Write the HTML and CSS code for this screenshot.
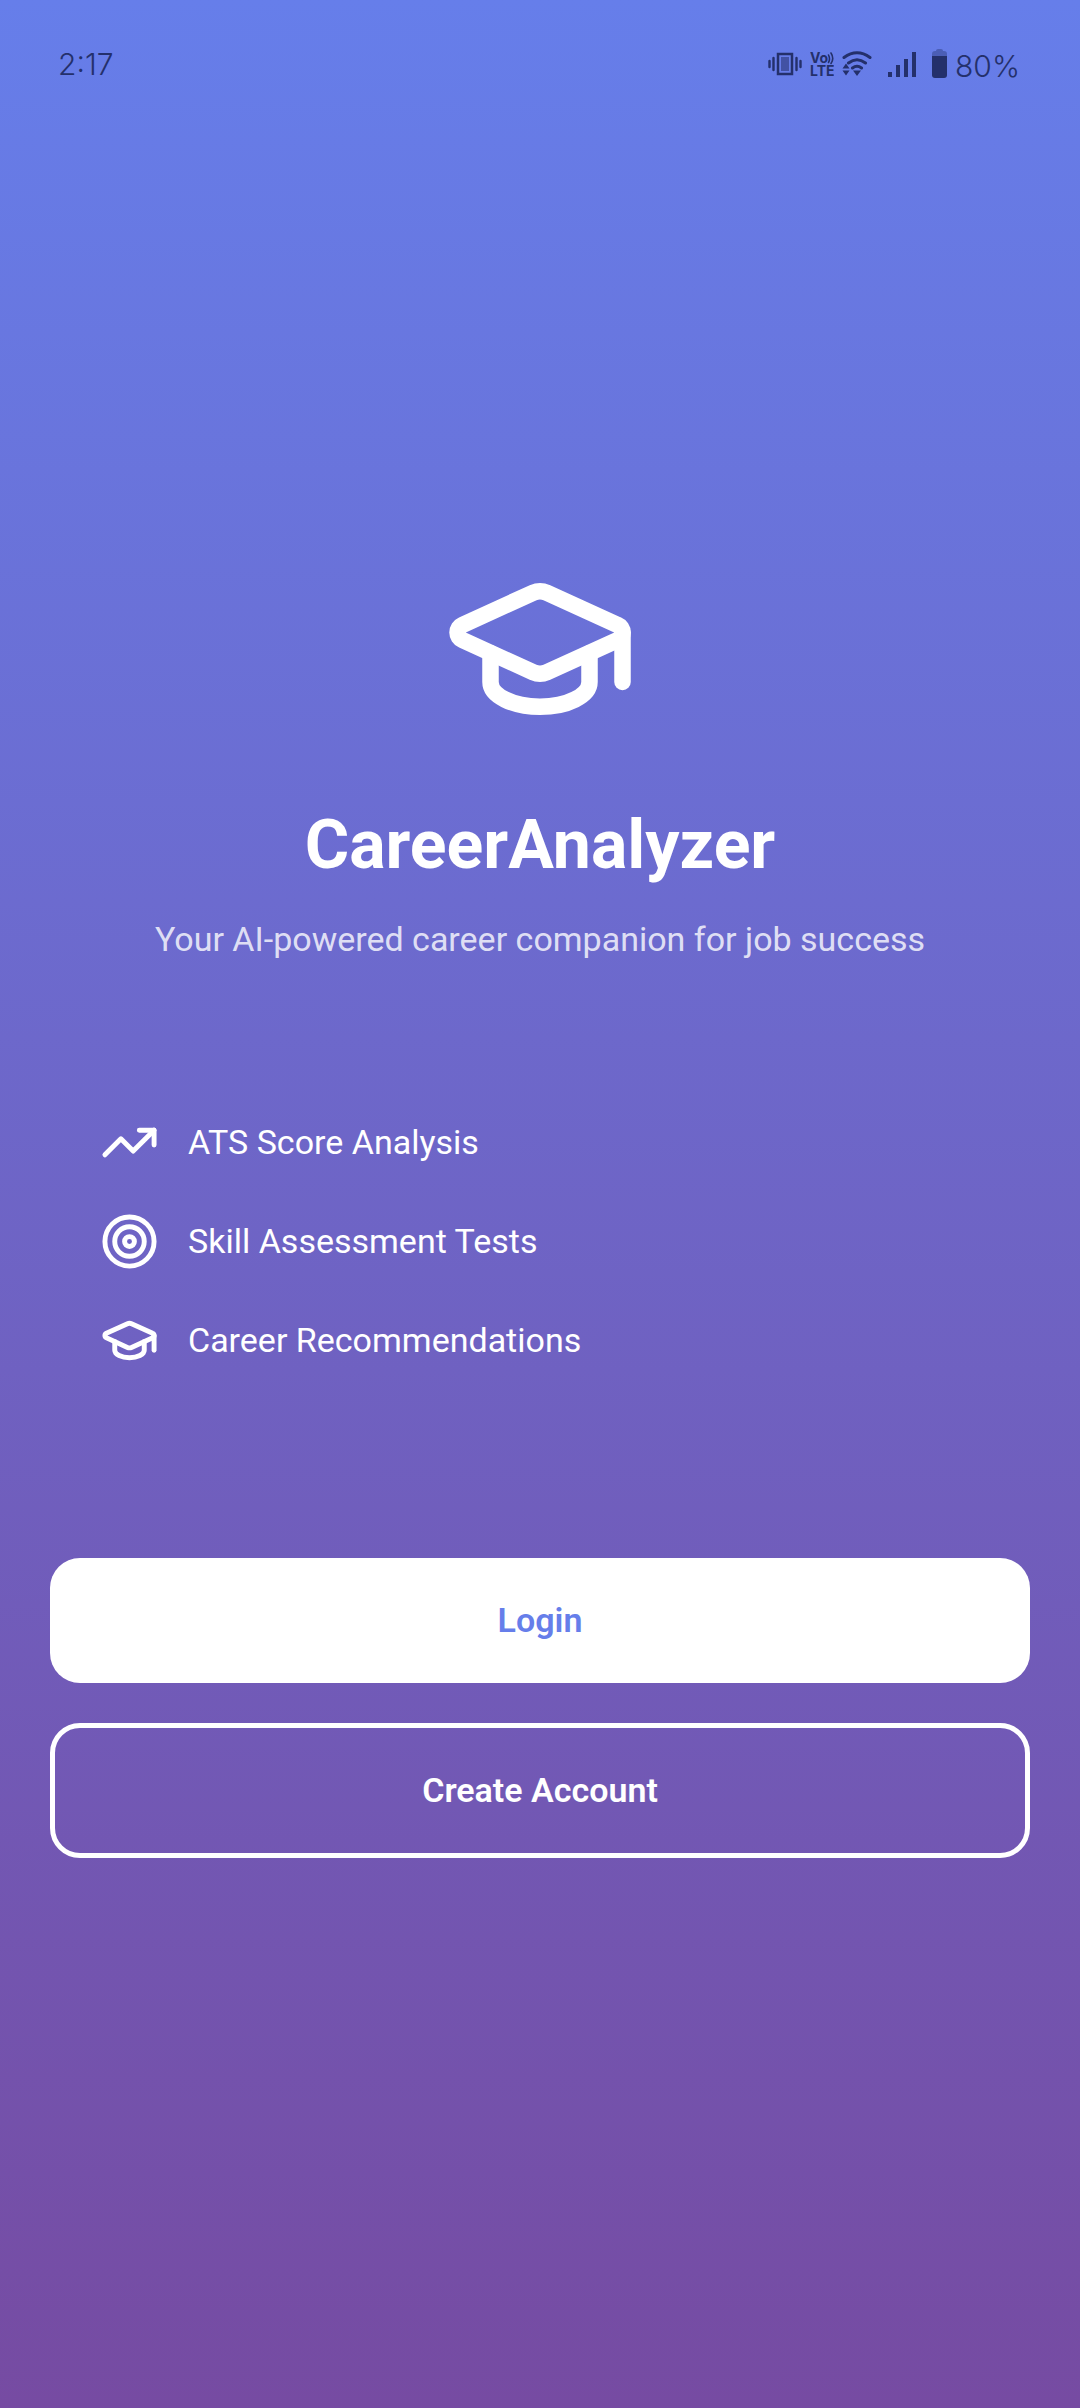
FILE: index.html
```html
<!DOCTYPE html>
<html lang="en">
<head>
<meta charset="utf-8">
<meta name="viewport" content="width=device-width, initial-scale=1">
<title>CareerAnalyzer</title>
<link rel="stylesheet" href="styles.css">
</head>
<body>
<div class="screen">
  <header class="status-bar">
    <time class="clock">2:17</time>
    <div class="indicators">
      <svg class="status-icon" width="34" height="32" viewBox="0 0 34 32" aria-label="Vibrate">
        <rect x="10" y="6" width="14" height="20" fill="none" stroke="currentColor" stroke-width="2.500"/>
        <path d="M13 9h8v14h-8z" fill="currentColor" opacity=".55"/>
        <path d="M1.500 13v6M5.500 10v12M28.500 10v12M32.500 13v6" fill="none" stroke="currentColor" stroke-width="2.400" stroke-linecap="round"/>
      </svg>
      <svg class="status-icon" width="24" height="32" viewBox="0 0 24 32" aria-label="VoLTE">
        <text class="volte" x="0" y="15">Vo</text>
        <path d="M18.500 7q2 4 0 7.500M21 5q3.500 5.500 0 10.500" fill="none" stroke="currentColor" stroke-width="1.600" stroke-linecap="round"/>
        <text class="volte" x="0" y="28">LTE</text>
      </svg>
      <svg class="status-icon" width="30" height="32" viewBox="0 0 30 32" aria-label="Wi-Fi">
        <path d="M2 9.500Q15 0 28 9.500M6.500 15Q15 8.500 23.500 15M10.500 20Q15 16.500 19.500 20" fill="none" stroke="currentColor" stroke-width="3" stroke-linecap="round"/>
        <path d="M.5 20.500l3.500-5 3.500 5zM.5 22.500h7L4 27.500zM11 22.500h8l-4 5.500z" fill="currentColor"/>
      </svg>
      <svg class="status-icon signal" width="28" height="32" viewBox="0 0 28 32" aria-label="Mobile signal">
        <path d="M0 24h4v5H0zM8 17h4v12H8zM16 11h4v18h-4zM24 4h4v25h-4z" fill="currentColor"/>
      </svg>
      <svg class="status-icon battery" width="15" height="32" viewBox="0 0 15 32" aria-label="Battery">
        <path d="M0 8V6q0-3 3-3h1q0-2 2-2h3q2 0 2 2h1q3 0 3 3v2z" fill="currentColor" opacity=".4"/>
        <path d="M0 8h15v19q0 3-3 3H3q-3 0-3-3z" fill="currentColor"/>
      </svg>
      <span class="percent">80%</span>
    </div>
  </header>

  <main class="welcome">
    <svg class="logo" viewBox="0 0 24 24" aria-hidden="true">
      <path d="M21.42 10.922a1 1 0 0 0-.019-1.838L12.83 5.18a2 2 0 0 0-1.66 0L2.6 9.08a1 1 0 0 0 0 1.832l8.57 3.908a2 2 0 0 0 1.66 0z"/>
      <path d="M22 10v6"/>
      <path d="M6 12.500V16a6 3 0 0 0 12 0v-3.500"/>
    </svg>
    <h1 class="title">CareerAnalyzer</h1>
    <p class="tagline">Your AI-powered career companion for job success</p>

    <ul class="features">
      <li class="feature">
        <svg class="feature-icon" viewBox="0 0 24 24" aria-hidden="true">
          <path d="M22 7l-8.500 8.500-5-5L2 17"/>
          <path d="M16 7h6v6"/>
        </svg>
        <span>ATS Score Analysis</span>
      </li>
      <li class="feature">
        <svg class="feature-icon" viewBox="0 0 24 24" aria-hidden="true">
          <circle cx="12" cy="12" r="10"/>
          <circle cx="12" cy="12" r="6"/>
          <circle cx="12" cy="12" r="2"/>
        </svg>
        <span>Skill Assessment Tests</span>
      </li>
      <li class="feature">
        <svg class="feature-icon" viewBox="0 0 24 24" aria-hidden="true">
          <path d="M21.42 10.922a1 1 0 0 0-.019-1.838L12.83 5.18a2 2 0 0 0-1.66 0L2.6 9.08a1 1 0 0 0 0 1.832l8.57 3.908a2 2 0 0 0 1.66 0z"/>
          <path d="M22 10v6"/>
          <path d="M6 12.500V16a6 3 0 0 0 12 0v-3.500"/>
        </svg>
        <span>Career Recommendations</span>
      </li>
    </ul>

    <div class="actions">
      <button class="button button-solid" type="button">Login</button>
      <button class="button button-outline" type="button">Create Account</button>
    </div>
  </main>
</div>
</body>
</html>
```

FILE: styles.css
```css
* {
  box-sizing: border-box;
}

body {
  margin: 0;
  font-family: Roboto, "Liberation Sans", sans-serif;
  color: #fff;
}

.screen {
  display: flex;
  flex-direction: column;
  min-height: 100vh;
  background: linear-gradient(#667eea, #764ba2);
}

.status-bar {
  display: flex;
  align-items: center;
  justify-content: space-between;
  height: 128px;
  padding: 0 60px 0 58px;
  color: #24306b;
  font-family: Inter, "Liberation Sans", sans-serif;
  font-size: 30px;
  font-weight: 300;
  line-height: 40px;
}

.indicators {
  display: flex;
  align-items: center;
  gap: 8px;
}

.status-icon {
  display: block;
}

.signal,
.battery {
  margin-left: 8px;
}

.percent {
  padding-top: 4px;
}

.volte {
  fill: currentColor;
  font-size: 14px;
  font-weight: 700;
}

.welcome {
  display: flex;
  flex: 1;
  flex-direction: column;
  align-items: center;
  justify-content: center;
  padding: 0 50px 128px;
}

.logo,
.feature-icon {
  display: block;
  fill: none;
  stroke: currentColor;
  stroke-width: 2;
  stroke-linecap: round;
  stroke-linejoin: round;
}

.logo {
  width: 198px;
  height: 198px;
}

.title {
  margin: 56px 0 33px;
  font-size: 68px;
  font-weight: 700;
  line-height: 82px;
}

.tagline {
  margin: 0;
  color: rgba(255, 255, 255, 0.8);
  font-size: 34px;
  line-height: 41px;
  text-align: center;
}

.features {
  display: flex;
  flex-direction: column;
  align-self: stretch;
  gap: 40px;
  margin: 153px 0 188px;
  padding: 0 50px;
  list-style: none;
}

.feature {
  display: flex;
  align-items: center;
  gap: 29px;
  font-size: 34px;
  line-height: 41px;
}

.feature-icon {
  width: 59px;
  height: 59px;
}

.actions {
  display: flex;
  flex-direction: column;
  align-self: stretch;
  gap: 40px;
}

.button {
  padding: 42px 40px;
  border: 0;
  border-radius: 30px;
  font-family: inherit;
  font-size: 34px;
  font-weight: 600;
  line-height: 41px;
}

.button-solid {
  background: #fff;
  color: #667eea;
}

.button-outline {
  border: 5px solid #fff;
  background: transparent;
  color: #fff;
}
```
